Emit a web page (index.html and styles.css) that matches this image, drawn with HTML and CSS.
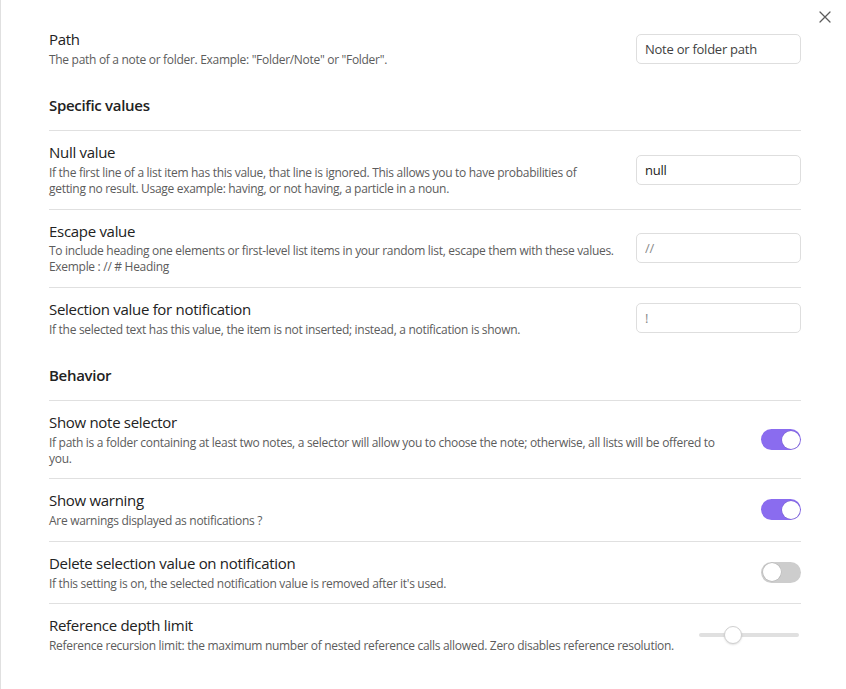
FILE: index.html
```html
<!DOCTYPE html>
<html lang="en">
<head>
<meta charset="utf-8">
<title>Settings</title>
<link rel="stylesheet" href="styles.css">
</head>
<body>
<div class="modal">
  <button class="close" aria-label="Close">
    <svg viewBox="0 0 24 24" width="20" height="20" fill="none" stroke="currentColor" stroke-width="1.5" stroke-linecap="round"><path d="M18 6 6 18M6 6l12 12"/></svg>
  </button>
  <div class="content">
    <div class="item first">
      <div class="info">
        <div class="name">Path</div>
        <div class="desc">The path of a note or folder. Example: "Folder/Note" or "Folder".</div>
      </div>
      <div class="control"><input class="text val-mid" type="text" value="Note or folder path"></div>
    </div>

    <div class="item heading">
      <div class="info"><div class="name">Specific values</div></div>
    </div>

    <div class="item">
      <div class="info">
        <div class="name">Null value</div>
        <div class="desc">If the first line of a list item has this value, that line is ignored. This allows you to have probabilities of<br>getting no result. Usage example: having, or not having, a particle in a noun.</div>
      </div>
      <div class="control"><input class="text val-dark" type="text" value="null"></div>
    </div>

    <div class="item">
      <div class="info">
        <div class="name">Escape value</div>
        <div class="desc">To include heading one elements or first-level list items in your random list, escape them with these values.<br>Exemple : // # Heading</div>
      </div>
      <div class="control"><input class="text val-faint" type="text" value="//"></div>
    </div>

    <div class="item">
      <div class="info">
        <div class="name">Selection value for notification</div>
        <div class="desc">If the selected text has this value, the item is not inserted; instead, a notification is shown.</div>
      </div>
      <div class="control"><input class="text val-faint" type="text" value="!"></div>
    </div>

    <div class="item heading">
      <div class="info"><div class="name">Behavior</div></div>
    </div>

    <div class="item">
      <div class="info">
        <div class="name">Show note selector</div>
        <div class="desc">If path is a folder containing at least two notes, a selector will allow you to choose the note; otherwise, all lists will be offered to<br>you.</div>
      </div>
      <div class="control"><div class="toggle on"></div></div>
    </div>

    <div class="item">
      <div class="info">
        <div class="name">Show warning</div>
        <div class="desc">Are warnings displayed as notifications ?</div>
      </div>
      <div class="control"><div class="toggle on"></div></div>
    </div>

    <div class="item">
      <div class="info">
        <div class="name">Delete selection value on notification</div>
        <div class="desc">If this setting is on, the selected notification value is removed after it's used.</div>
      </div>
      <div class="control"><div class="toggle"></div></div>
    </div>

    <div class="item">
      <div class="info">
        <div class="name">Reference depth limit</div>
        <div class="desc">Reference recursion limit: the maximum number of nested reference calls allowed. Zero disables reference resolution.</div>
      </div>
      <div class="control">
        <div class="slider"><div class="track"></div><div class="thumb"></div></div>
      </div>
    </div>
  </div>
</div>
</body>
</html>
```

FILE: styles.css
```css
* { box-sizing: border-box; }

html, body {
  margin: 0;
  padding: 0;
  background: #ffffff;
}

body {
  font-family: "Open Sans", "Noto Sans", sans-serif;
  color: #222222;
}

.modal {
  position: relative;
  min-height: 689px;
  border-left: 1px solid #e0e0e0;
  background: #ffffff;
}

.close {
  position: absolute;
  top: 6px;
  left: 813px;
  width: 22px;
  height: 22px;
  padding: 1px;
  border: none;
  background: transparent;
  color: #5c5c5c;
  display: flex;
  align-items: center;
  justify-content: center;
}

.content {
  padding: 18px 45px 0 48px;
}

.item {
  display: flex;
  align-items: center;
  padding: 12px 0;
  border-top: 1px solid #e0e0e0;
}

.item.first {
  border-top: none;
}

.item.heading {
  border-top: none;
  padding: 17px 0 14.5px;
}

.item.heading .name {
  font-weight: 600;
}

.info {
  flex: 1 1 auto;
  min-width: 0;
  margin-right: 16px;
}

.name {
  font-size: 15px;
  line-height: 19.5px;
  letter-spacing: -0.3px;
  color: #222222;
}

.desc {
  font-size: 12px;
  line-height: 15.6px;
  letter-spacing: -0.3px;
  color: #5c5c5c;
  padding-top: 2.4px;
}

.control {
  flex: 0 0 auto;
  display: flex;
  justify-content: flex-end;
  align-items: center;
}

.text {
  width: 165px;
  height: 30px;
  padding: 0 8px;
  border: 1px solid #dedede;
  border-radius: 5px;
  background: #ffffff;
  font-family: "Open Sans", "Noto Sans", sans-serif;
  font-size: 13px;
  letter-spacing: -0.25px;
  outline: none;
}

.val-dark { color: #222222; }
.val-mid { color: #3f3f3f; }
.val-faint { color: #8a8a8a; }

.toggle {
  position: relative;
  width: 40px;
  height: 21px;
  border-radius: 11px;
  background: #cdcdcd;
}

.toggle::before {
  content: "";
  position: absolute;
  top: 1.5px;
  left: 1.5px;
  width: 18px;
  height: 18px;
  border-radius: 50%;
  background: #ffffff;
  box-shadow: 0 0 0 0.5px rgba(0, 0, 0, 0.12);
}

.toggle.on {
  background: #8a6cef;
}

.toggle.on::before {
  left: auto;
  right: 1.5px;
}

.slider {
  position: relative;
  width: 100px;
  height: 18px;
  margin-right: 2px;
  display: flex;
  align-items: center;
}

.track {
  width: 100%;
  height: 4px;
  border-radius: 2px;
  background: #e0e0e0;
}

.thumb {
  position: absolute;
  top: 0;
  left: 25px;
  width: 18px;
  height: 18px;
  border-radius: 50%;
  background: #ffffff;
  border: 1px solid #d0d0d0;
  box-shadow: 0 1px 2px rgba(0, 0, 0, 0.12);
}
```
